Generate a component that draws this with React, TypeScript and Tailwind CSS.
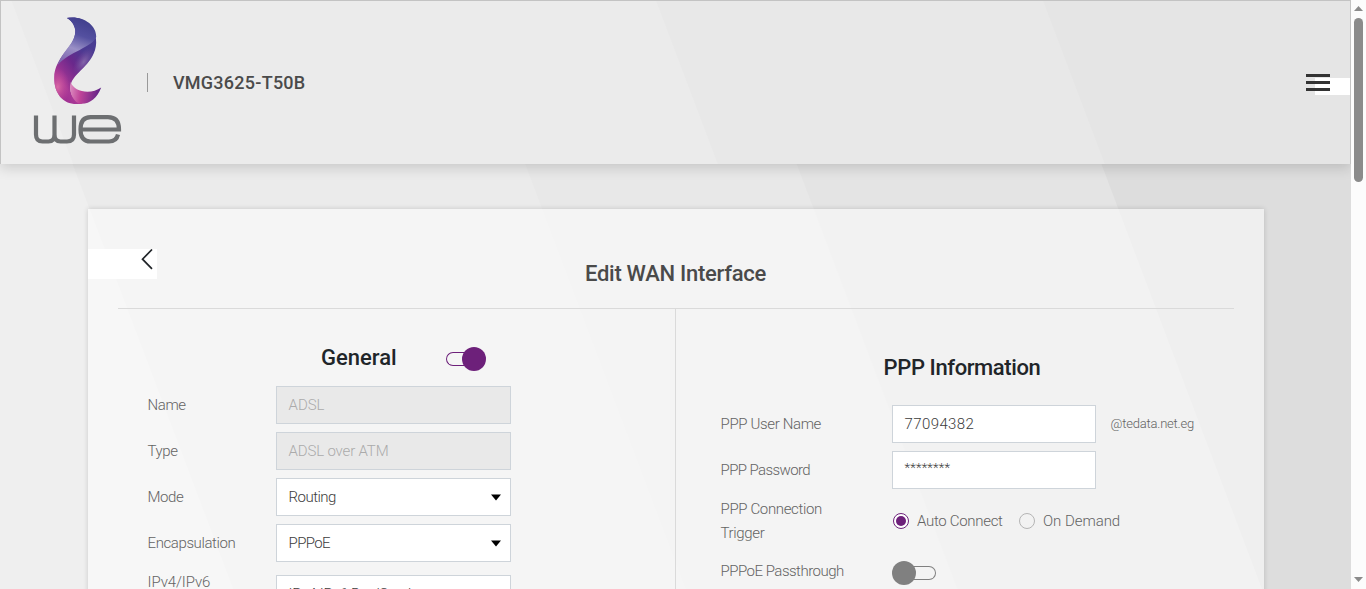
import type { ReactNode } from "react";

function Logo() {
  return (
    <svg width="90" height="130" viewBox="0 0 90 130" className="block">
      <defs>
        <linearGradient id="top" x1="0.6" y1="0" x2="0.3" y2="1">
          <stop offset="0" stopColor="#403e8c" />
          <stop offset="0.35" stopColor="#5450a0" />
          <stop offset="0.65" stopColor="#9a90c6" />
          <stop offset="1" stopColor="#7d62ad" />
        </linearGradient>
        <linearGradient id="body" x1="0.85" y1="0" x2="0.15" y2="1">
          <stop offset="0" stopColor="#453f92" />
          <stop offset="0.35" stopColor="#4c3a92" />
          <stop offset="0.55" stopColor="#6a288b" />
          <stop offset="0.8" stopColor="#a83896" />
          <stop offset="1" stopColor="#9a2a90" />
        </linearGradient>
        <radialGradient id="glow" cx="0.5" cy="0.5" r="0.5">
          <stop offset="0" stopColor="#dc6ca6" stopOpacity="0.95" />
          <stop offset="1" stopColor="#c64799" stopOpacity="0" />
        </radialGradient>
        <radialGradient id="sheen" cx="0.5" cy="0.5" r="0.5">
          <stop offset="0" stopColor="#8c6fae" stopOpacity="0.85" />
          <stop offset="1" stopColor="#7a4a9c" stopOpacity="0" />
        </radialGradient>
        <linearGradient id="tail" x1="0" y1="0.3" x2="1" y2="0.4">
          <stop offset="0" stopColor="#dd8abf" />
          <stop offset="0.35" stopColor="#bf4499" />
          <stop offset="1" stopColor="#5c2086" />
        </linearGradient>
        <clipPath id="flame">
          <path d="M34 2C50 -1 64 10 63.500 27C62.500 47 43 55 38.500 67C35 78 43 86 50 87.500C32 91 21.500 79 21.500 62C21.500 40 44 31 42.500 14C41.500 8 38 4 34 2Z" />
        </clipPath>
      </defs>
      <g transform="translate(0.7 0)">
        <g clipPath="url(#flame)">
          <rect x="20" y="0" width="46" height="90" fill="url(#body)" />
          <ellipse cx="25" cy="71" rx="12" ry="19" fill="url(#glow)" />
          <ellipse cx="51" cy="46" rx="8" ry="16" fill="url(#sheen)" transform="rotate(32 51 46)" />
        </g>
        <path d="M34 2C50 -1 64 9 63.500 21C60 31 36 36 25 49C29 35 44 27 42.500 13C41.500 8 38 4 34 2Z" fill="url(#top)" />
        <path d="M38 66C41 76 58 79 68.500 71.500C64 83 56 89 46 87.500C38.500 83 36.500 75 38 66Z" fill="url(#tail)" />
      </g>
      <g fill="none" stroke="#6d6f71" strokeWidth="4.200">
        <path d="M4 99.500V118.500Q4 125.500 10.500 125.500H16.500Q22.500 125.500 22.500 118.500V99.500M22.500 118.500Q22.500 125.500 28.500 125.500H35Q42 125.500 42 118.500V99.500" />
        <path d="M48.500 113.500H87Q87 101.200 76 101.200H58.500Q48.500 101.200 48.500 113.500Q48.500 125.500 58.500 125.500H77Q84.500 125.500 86 118.500" />
      </g>
    </svg>
  );
}

function Field({ children, disabled, select, track = "" }: { children: ReactNode; disabled?: boolean; select?: boolean; track?: string }) {
  return (
    <div
      className={
        "flex h-[38px] w-full items-center justify-between border border-[#ced4da] pr-[9px] pl-[11.5px] text-[15px] font-light " +
        (disabled ? "bg-[#e9e9e9] text-[#ababab]" : "bg-white text-[#3c3c3c]")
      }
    >
      <span className={track}>{children}</span>
      {select && (
        <svg width="10" height="7" viewBox="0 0 10 7">
          <path d="M0 0.500H10L5 6.500Z" fill="#000" />
        </svg>
      )}
    </div>
  );
}

function LeftRow({ label, children }: { label: string; children: ReactNode }) {
  return (
    <div className="flex h-[38px] items-center">
      <div className="w-[128.5px] shrink-0 text-[15px] font-light tracking-[-0.4px] text-[#636363]">{label}</div>
      <div className="w-[235px]">{children}</div>
    </div>
  );
}

function RightLabel({ children }: { children: ReactNode }) {
  return (
    <div className="w-[171.5px] shrink-0 pr-10 text-[15px] leading-6 font-light tracking-[-0.35px] text-[#636363]">{children}</div>
  );
}

export default function App() {
  return (
    <div className="flex h-[589px] w-[1366px] overflow-hidden font-[Roboto,sans-serif]">
      <div className="flex w-[1351px] shrink-0 flex-col bg-[linear-gradient(69.3deg,#efefef_217.6px,#ebebeb_218.6px,#ebebeb_641px,#e8e8e8_642px,#e8e8e8_895px,#e4e4e4_896px,#e4e4e4_1180px,#dddddd_1181px)]">
        <header className="flex h-[164px] shrink-0 items-start border border-b-0 border-[#c3c3c3] bg-[linear-gradient(69.3deg,#eeeeee_67px,#ebebeb_68px,#ebebeb_670px,#e8e8e8_671px,#e8e8e8_1032px,#e5e5e5_1033px)] shadow-[0_4px_12px_rgba(0,0,0,0.15)]">
          <div className="mt-[15px] ml-[31px]">
            <Logo />
          </div>
          <div className="mt-[72px] ml-[25px] h-[19px] w-px bg-[#999]" />
          <div className="mt-[70px] ml-[25px] text-lg leading-6 font-medium tracking-[0.25px] text-[#4a4a4a]">VMG3625-T50B</div>
          <div className="mt-[73px] ml-auto flex h-[21px] items-start bg-[linear-gradient(90deg,transparent_9px,white_9px)] bg-[length:100%_17px] bg-[position:0_4px] bg-no-repeat pr-5">
            <div className="flex flex-col gap-1">
              <div className="h-[3px] w-6 bg-[#333]" />
              <div className="h-[3px] w-6 bg-[#333]" />
              <div className="h-[3px] w-6 bg-[#333]" />
            </div>
          </div>
        </header>

        <main className="mt-[45px] ml-[88px] h-[500px] w-[1176px] shrink-0 bg-white/52 shadow-[0_0_5px_rgba(0,0,0,0.16)]">
          <div className="flex h-[99px] pt-10">
            <div className="flex h-[30px] w-[69px] shrink-0 justify-end bg-white pr-1">
              <svg width="12" height="21" viewBox="0 0 12 21">
                <path d="M11 0.500L1.500 10.200L11 19.900" fill="none" stroke="#212529" strokeWidth="1.700" />
              </svg>
            </div>
            <h1 className="mt-[11px] w-[1037px] text-center text-[22px] leading-7 font-medium tracking-[-0.28px] text-[#4a4a4a]">Edit WAN Interface</h1>
          </div>
          <div className="mx-[30px] flex h-[401px] border-t border-[#dadada]">
            <section className="w-[557px] shrink-0 pl-[29.5px]">
              <div className="flex h-[77px] items-start pt-[34px] pl-[173.5px]">
                <h2 className="mt-px w-[125px] text-[22px] leading-7 font-medium text-[#212529]">General</h2>
                <div className="mt-1 flex h-6 w-10 items-center">
                  <div className="h-[14px] w-6 rounded-l-full border border-r-0 border-[#6d207a]" />
                  <div className="-ml-2 h-6 w-6 shrink-0 rounded-full bg-[#6d207a]" />
                </div>
              </div>
              <div className="flex flex-col gap-2">
                <LeftRow label="Name"><Field disabled>ADSL</Field></LeftRow>
                <LeftRow label="Type"><Field disabled track="tracking-[-0.15px]">ADSL over ATM</Field></LeftRow>
                <LeftRow label="Mode"><Field select track="tracking-[-0.5px]">Routing</Field></LeftRow>
                <LeftRow label="Encapsulation"><Field select track="tracking-[-0.6px]">PPPoE</Field></LeftRow>
              </div>
              <div className="mt-2 flex">
                <div className="w-[128.5px] shrink-0 text-[15px] leading-6 font-light tracking-[-0.1px] text-[#636363]">IPv4/IPv6</div>
                <div className="mt-[5px] w-[235px]"><Field select track="tracking-[-0.25px]">IPv4 IPv6 DualStack</Field></div>
              </div>
            </section>
            <section className="grow border-l border-[#dadada] pl-[44.5px]">
              <div className="h-24 w-[483px] pt-[45px] text-center">
                <h2 className="text-[22px] leading-7 font-medium tracking-[-0.4px] text-[#212529]">PPP Information</h2>
              </div>
              <div className="flex h-[38px] items-center">
                <RightLabel>PPP User Name</RightLabel>
                <div className="w-[204px]"><Field track="tracking-[0.4px]">77094382</Field></div>
                <span className="ml-[14.5px] text-[13px] font-light tracking-[-0.2px] text-[#636363]">@tedata.net.eg</span>
              </div>
              <div className="mt-2 flex h-[38px] items-center">
                <RightLabel><span className="tracking-[-0.6px]">PPP Password</span></RightLabel>
                <div className="w-[204px]"><Field track="-mt-[4px] text-[13px] tracking-[0.2px]">********</Field></div>
              </div>
              <div className="mt-2 flex h-12 items-center">
                <RightLabel>PPP Connection Trigger</RightLabel>
                <div className="ml-px flex items-center text-[15px] font-light text-[#636363]">
                  <div className="flex h-4 w-4 items-center justify-center rounded-full border border-[#6d207a] bg-white">
                    <div className="h-[10px] w-[10px] rounded-full bg-[#6d207a]" />
                  </div>
                  <span className="ml-2 w-[102px] tracking-[-0.3px]">Auto Connect</span>
                  <div className="h-4 w-4 rounded-full border border-[#b5b5b5]" />
                  <span className="ml-2 tracking-[-0.05px]">On Demand</span>
                </div>
              </div>
              <div className="mt-[14px] flex h-6 items-center">
                <div className="w-[171.5px] shrink-0 text-[15px] font-light tracking-[-0.5px] text-[#636363]">PPPoE Passthrough</div>
                <div className="mt-1 flex items-center">
                  <div className="h-6 w-6 rounded-full bg-[#808080]" />
                  <div className="-ml-1 h-[14px] w-6 rounded-r-full border border-l-0 border-[#808080]" />
                </div>
              </div>
            </section>
          </div>
        </main>
      </div>
      <div className="flex h-[589px] w-[15px] shrink-0 flex-col items-center bg-[#fcfcfc] pt-[6px] pb-[7px]">
        <svg width="9" height="5" viewBox="0 0 9 5"><path d="M0 5L4.500 0L9 5Z" fill="#8b8b8b" /></svg>
        <div className="mt-[7px] h-[164px] w-[9px] rounded-full bg-[#8b8b8b]" />
        <svg className="mt-auto" width="9" height="5" viewBox="0 0 9 5"><path d="M0 0H9L4.500 5Z" fill="#8b8b8b" /></svg>
      </div>
    </div>
  );
}
